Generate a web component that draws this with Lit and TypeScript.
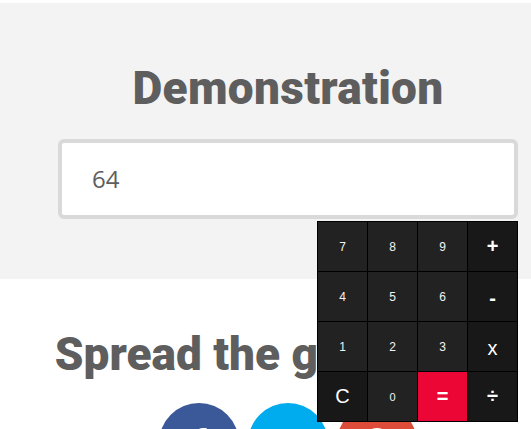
import { LitElement, html, css } from "lit";
import { customElement } from "lit/decorators.js";

type Key = { t: string; k: string };
const keys: Key[] = [
  { t: "7", k: "n" }, { t: "8", k: "n" }, { t: "9", k: "n" }, { t: "+", k: "op bold" },
  { t: "4", k: "n" }, { t: "5", k: "n" }, { t: "6", k: "n" }, { t: "-", k: "op bold low" },
  { t: "1", k: "n" }, { t: "2", k: "n" }, { t: "3", k: "n" }, { t: "x", k: "op low" },
  { t: "C", k: "clear" }, { t: "0", k: "zero" }, { t: "=", k: "eq" }, { t: "÷", k: "op bold" },
];

@customElement("app-root")
export class AppRoot extends LitElement {
  static styles = css`
    :host { display: block; position: relative; width: 531px; height: 429px; overflow: hidden; background: #fff; font-family: Roboto, "Liberation Sans", sans-serif; color: #5e5e5e; }
    .demo { margin-top: 3px; height: 276px; background: #f3f3f3; box-sizing: border-box; padding: 60px 13px 0 58px; display: flex; flex-direction: column; }
    h2 { margin: 0; font-weight: 900; font-size: 46px; line-height: 50px; text-align: center; color: #5e5e5e; }
    .demo h2 { letter-spacing: 0.3px; }
    .input { margin-top: 26px; height: 80px; box-sizing: border-box; border: 4px solid #d9d9d9; border-radius: 6px; background: #fff; padding: 0 30px 2px; display: flex; align-items: center; font-family: "Open Sans", sans-serif; font-size: 24px; color: #5e5e5e; }
    .share { padding: 50px 13px 0 58px; display: flex; flex-direction: column; align-items: center; }
    .share h2 { white-space: nowrap; padding-right: 12px; }
    .social { margin-top: 24px; display: flex; gap: 9px; }
    .circle { width: 80px; height: 80px; border-radius: 50%; display: flex; align-items: center; justify-content: center; }
    .circle svg { display: block; width: 30px; height: 30px; fill: #fff; }
    .fb { background: #3b5998; }
    .tw { background: #00aced; }
    .gp { background: #dd4b39; }
    .calc { position: absolute; left: 317px; top: 221px; width: 201px; height: 201px; background: #000; box-sizing: border-box; display: grid; grid-template-columns: repeat(4, 49px); grid-auto-rows: 49px; gap: 1px; padding: 1px; font-family: "Liberation Sans", Arial, sans-serif; }
    .key { display: flex; align-items: center; justify-content: center; color: #f4f4f4; font-size: 12px; background: #222; }
    .key.op { background: #181818; color: #fff; font-size: 20px; }
    .key.bold { font-weight: 700; }
    .key.low { padding-top: 3px; box-sizing: border-box; }
    .key.clear { background: #181818; color: #fff; font-size: 20px; }
    .key.zero { font-size: 11px; }
    .key.eq { background: #ec0636; color: #fff; font-size: 20px; font-weight: 700; }
  `;

  render() {
    return html`
      <section class="demo">
        <h2>Demonstration</h2>
        <div class="input">64</div>
      </section>
      <section class="share">
        <h2>Spread the good word</h2>
        <div class="social">
          <a class="circle fb"><svg viewBox="0 0 24 24"><path d="M14 24V13h3.600l.6-4.300H14V6c0-1.200.4-2 2.100-2h2.200V.2C17.900.1 16.600 0 15.100 0 11.900 0 9.700 1.900 9.700 5.500v3.200H6V13h3.700v11z"/></svg></a>
          <a class="circle tw"></a>
          <a class="circle gp"><svg viewBox="0 0 24 24"><path d="M12 0c3 0 5.300 1.100 7 2.700l-2.800 2.800C15.100 4.500 13.800 4 12 4 8 4 4.800 7.500 4.800 12S8 20 12 20c4 0 6-2.400 6.400-5.500H12v-3.700h10.400c.1.600.2 1.200.2 2C22.600 19.400 18.200 24 12 24 5.400 24 .6 18.600.6 12S5.400 0 12 0z"/></svg></a>
        </div>
      </section>
      <div class="calc">
        ${keys.map((x) => html`<div class="key ${x.k}">${x.t}</div>`)}
      </div>
    `;
  }
}
